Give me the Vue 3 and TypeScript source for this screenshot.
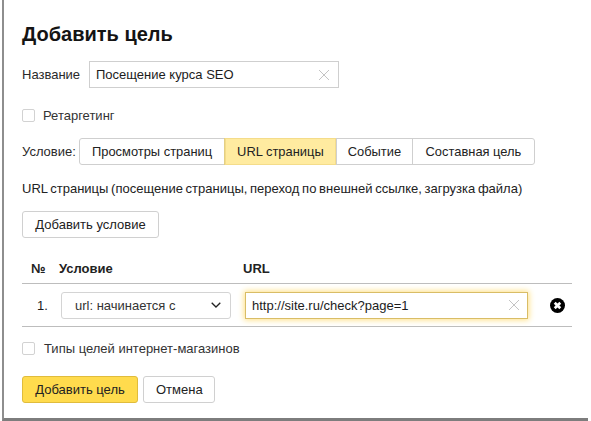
<script setup lang="ts">
const tabs = [
  { label: 'Просмотры страниц', active: false },
  { label: 'URL страницы', active: true },
  { label: 'Событие', active: false },
  { label: 'Составная цель', active: false },
]
</script>

<template>
  <div class="page">
    <div class="dialog">
      <h1 class="title">Добавить цель</h1>

      <div class="name-row">
        <span class="label">Название</span>
        <div class="input name-input">
          <span class="value">Посещение курса SEO</span>
          <svg class="clear" width="12" height="12" viewBox="0 0 12 12"><path d="M1 1 11 11M11 1 1 11" /></svg>
        </div>
      </div>

      <label class="check retarget">
        <span class="box"></span>
        <span>Ретаргетинг</span>
      </label>

      <div class="cond-row">
        <span class="label cond-label">Условие:</span>
        <div class="tabs">
          <span v-for="t in tabs" :key="t.label" class="tab" :class="{ active: t.active }">{{ t.label }}</span>
        </div>
      </div>

      <p class="desc">URL страницы (посещение страницы, переход по внешней ссылке, загрузка файла)</p>

      <button class="btn add-cond" type="button">Добавить условие</button>

      <div class="table">
        <div class="thead">
          <span class="c-num">№</span>
          <span class="c-cond">Условие</span>
          <span>URL</span>
        </div>
        <div class="trow">
          <span class="c-idx">1.</span>
          <div class="select">
            <span>url: начинается с</span>
            <svg width="10" height="6" viewBox="0 0 10 6"><path d="M.7.7 5 5 9.3.7" /></svg>
          </div>
          <div class="input url-input">
            <span class="value">http://site.ru/check?page=1</span>
            <svg class="clear" width="12" height="12" viewBox="0 0 12 12"><path d="M1 1 11 11M11 1 1 11" /></svg>
          </div>
          <svg class="remove" width="15" height="15" viewBox="0 0 14 14">
            <circle cx="7" cy="7" r="7" fill="#000" />
            <path d="M4.4 4.4 9.6 9.6M9.6 4.4 4.4 9.6" stroke="#fff" stroke-width="2.5" />
          </svg>
        </div>
      </div>

      <label class="check shop">
        <span class="box"></span>
        <span>Типы целей интернет-магазинов</span>
      </label>

      <div class="actions">
        <button class="btn primary" type="button">Добавить цель</button>
        <button class="btn cancel" type="button">Отмена</button>
      </div>
    </div>
  </div>
</template>

<style scoped>
.page {
  width: 591px;
  height: 421px;
  overflow: hidden;
  background: #fff;
  font-family: "Liberation Sans", Arial, sans-serif;
  font-size: 13px;
  color: #1c1c1c;
}
.dialog {
  box-sizing: border-box;
  width: 586px;
  height: 421px;
  margin-left: 2px;
  padding: 0 0 0 18px;
  background: #fff;
  border-left: 2px solid #8e8e8e;
  border-bottom: 3px solid #7d7d7d;
  display: flex;
  flex-direction: column;
  align-items: flex-start;
}
.title {
  margin: 22px 0 0;
  font-size: 20px;
  line-height: 24px;
  font-weight: 700;
  color: #141414;
}
.name-row {
  display: flex;
  align-items: center;
  margin-top: 15px;
}
.label { color: #2a2a2a; }
.name-row .label { width: 67px; }
.input {
  box-sizing: border-box;
  height: 27px;
  display: flex;
  align-items: center;
  justify-content: space-between;
  background: #fff;
  border: 1px solid #cfcfcf;
  padding: 0 7px 0 6px;
}
.name-input { width: 250px; padding-right: 8px; }
.clear path {
  fill: none;
  stroke: #c4c4c4;
  stroke-width: 1;
}
.check {
  display: flex;
  align-items: center;
  gap: 8px;
  color: #333;
}
.box {
  box-sizing: border-box;
  width: 13px;
  height: 13px;
  border: 1px solid #d2d2d2;
  border-radius: 2px;
  background: #fff;
}
.retarget {
  margin-top: 20px;
  height: 15px;
}
.cond-row {
  display: flex;
  align-items: center;
  margin-top: 15px;
}
.cond-label { width: 57px; }
.tabs {
  display: flex;
  height: 27px;
  box-sizing: border-box;
  border: 1px solid #cfcfcf;
  border-radius: 3px;
  background: #fff;
  font-size: 12.9px;
}
.tab {
  display: flex;
  align-items: center;
  padding: 0 12px;
  border-left: 1px solid #cfcfcf;
  color: #222;
}
.tab:first-child { border-left: 0; }
.tab:nth-child(3) { padding: 0 11px; }
.tab:last-child { padding: 0 12.5px; }
.tab.active {
  background: #ffeba0;
  border-left-color: #e3cf85;
  box-shadow: inset 0 0 0 1px #f4dc8a;
  margin: -1px 0;
}
.desc {
  margin: 16px 0 0;
  line-height: 15px;
  color: #222;
  word-spacing: -0.9px;
}
.btn {
  box-sizing: border-box;
  height: 27px;
  padding: 0 12px;
  font: inherit;
  color: #222;
  background: #fff;
  border: 1px solid #d0d0d0;
  border-radius: 3px;
}
.add-cond {
  margin-top: 15px;
  width: 137px;
}
.table {
  width: 550px;
  margin-top: 17px;
}
.thead {
  display: flex;
  align-items: center;
  height: 29px;
  padding-bottom: 1px;
  box-sizing: border-box;
  border-bottom: 1px solid #bdbdbd;
  font-weight: 700;
  color: #222;
}
.c-num { width: 37px; padding-left: 9px; box-sizing: border-box; }
.c-cond { width: 184px; }
.trow {
  display: flex;
  align-items: center;
  height: 43px;
  box-sizing: border-box;
  border-bottom: 1px solid #bdbdbd;
}
.c-idx { width: 39px; padding-left: 15px; box-sizing: border-box; }
.select {
  box-sizing: border-box;
  width: 170px;
  height: 27px;
  display: flex;
  align-items: center;
  justify-content: space-between;
  padding: 0 9px 0 13px;
  border: 1px solid #d4d4d4;
  border-radius: 3px;
  color: #333;
}
.select path {
  fill: none;
  stroke: #222;
  stroke-width: 1.3;
}
.url-input {
  width: 283px;
  margin-left: 14px;
  border-color: #d9bd66;
  box-shadow: 0 0 6px 1px #ffe082;
}
.remove { margin-left: 22px; }
.shop { margin-top: 14px; height: 15px; gap: 9px; }
.actions {
  display: flex;
  gap: 5px;
  margin-top: 20px;
}
.primary {
  width: 116px;
  background: #ffdb4d;
  border-color: #e0bc3c;
}
.cancel { width: 72px; }
</style>
